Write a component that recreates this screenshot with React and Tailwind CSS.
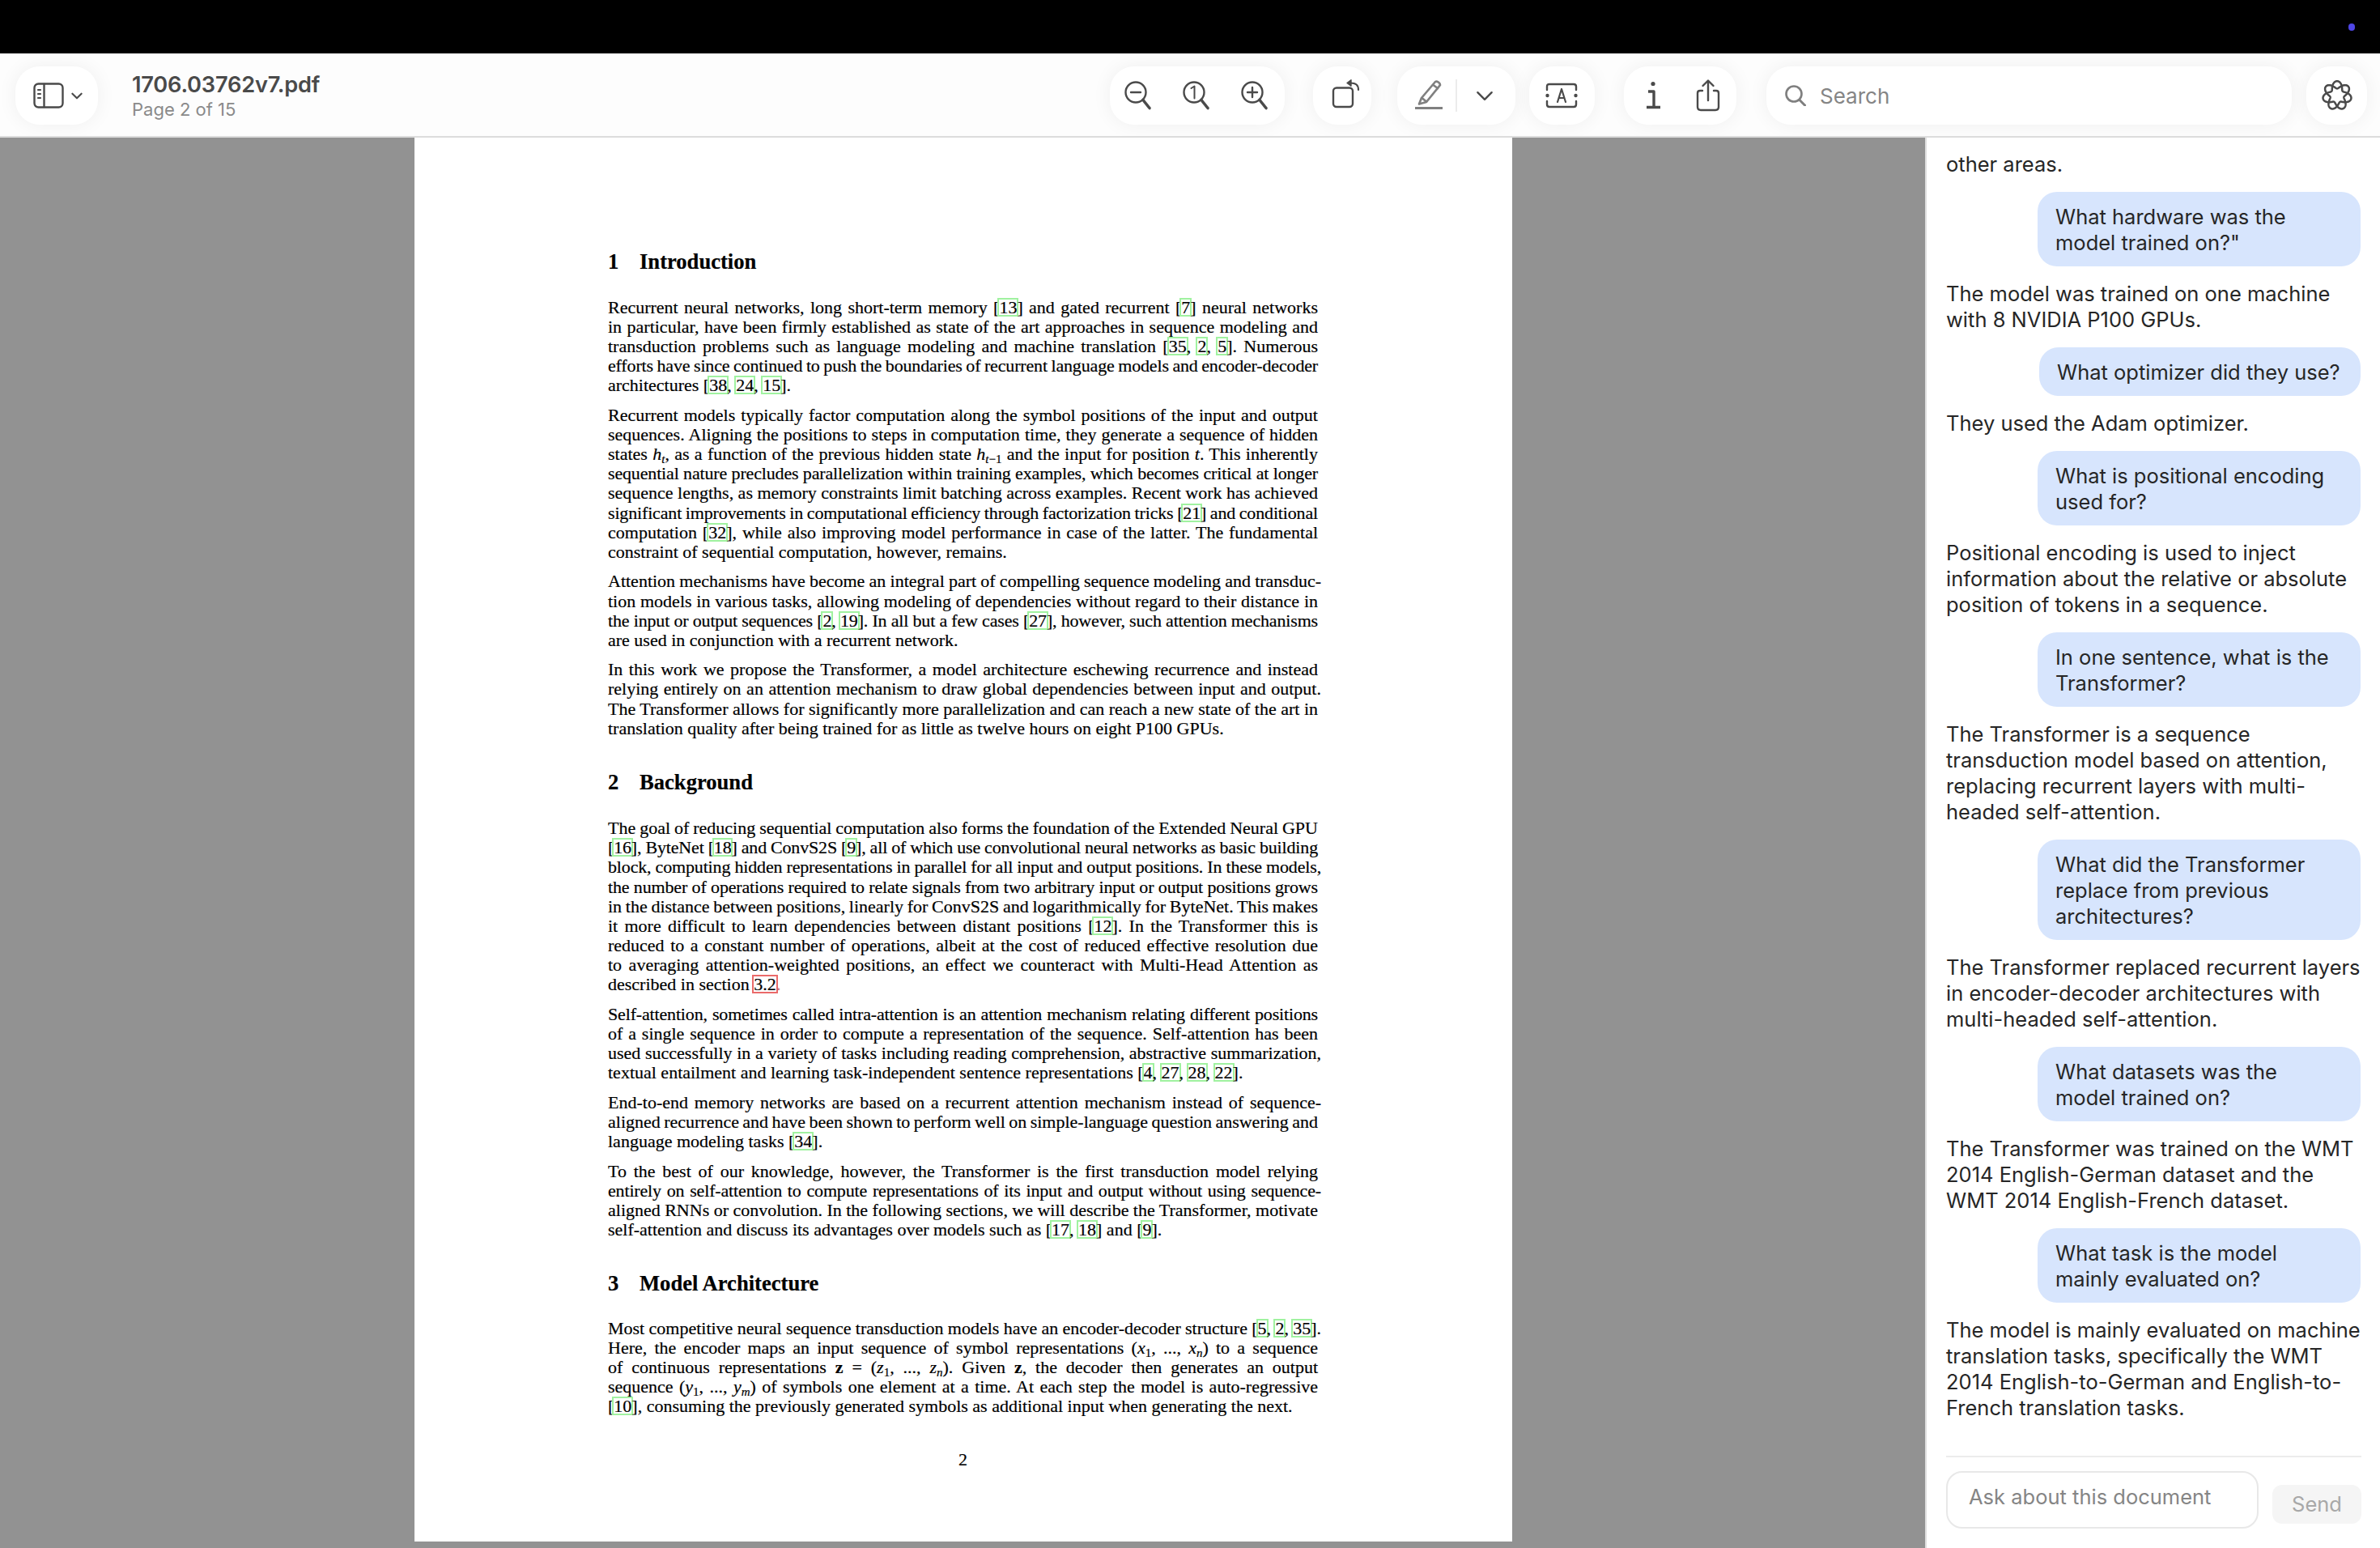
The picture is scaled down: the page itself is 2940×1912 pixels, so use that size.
import React from "react";

const C = ({ children, red }) => (
  <span className={"inline-block leading-[19px] outline-2 outline-solid " + (red ? "outline-[#ea6a6a]" : "outline-[#a0f2a0]")}>{children}</span>
);
const L = ({ children, last, wide, tight }) => (
  <div className={"h-[24.1px] leading-[24.1px] whitespace-nowrap " + (wide ? "w-[881px] " : "w-[877px] ") + (tight ? "tracking-[-0.16px] " : "") + (last ? "text-left" : "[text-align:justify] [text-align-last:justify] [word-spacing:-2.4px]")}>{children}</div>
);
const P = ({ children }) => <div className="mb-[12.6px]">{children}</div>;
const H = ({ n, t, className }) => (
  <div className={"flex font-bold text-[26.6px] leading-[24px] h-[24px] tracking-[0px] " + className}>
    <span className="w-[39px]">{n}</span>
    <span>{t}</span>
  </div>
);
const M = ({ children }) => <i className="italic">{children}</i>;
const S = ({ children }) => <span className="text-[15px] leading-[0] align-[-4px]">{children}</span>;

const Pdf = () => (
  <div className="w-[1356px] h-[1734px] bg-white pl-[239px] pt-[141px] text-black text-[22px] font-['Liberation_Serif',serif] tracking-[0px] [-webkit-text-stroke:0.2px_#000]">
    <H n="1" t="Introduction" className="mb-[33px]" />
    <P>
      <L>Recurrent neural networks, long short-term memory [<C>13</C>] and gated recurrent [<C>7</C>] neural networks</L>
      <L>in particular, have been firmly established as state of the art approaches in sequence modeling and</L>
      <L>transduction problems such as language modeling and machine translation [<C>35</C>, <C>2</C>, <C>5</C>]. Numerous</L>
      <L tight>efforts have since continued to push the boundaries of recurrent language models and encoder-decoder</L>
      <L last>architectures [<C>38</C>, <C>24</C>, <C>15</C>].</L>
    </P>
    <P>
      <L>Recurrent models typically factor computation along the symbol positions of the input and output</L>
      <L>sequences. Aligning the positions to steps in computation time, they generate a sequence of hidden</L>
      <L>states <M>h</M><S><M>t</M></S>, as a function of the previous hidden state <M>h</M><S><M>t</M>−1</S> and the input for position <M>t</M>. This inherently</L>
      <L tight>sequential nature precludes parallelization within training examples, which becomes critical at longer</L>
      <L>sequence lengths, as memory constraints limit batching across examples. Recent work has achieved</L>
      <L tight>significant improvements in computational efficiency through factorization tricks [<C>21</C>] and conditional</L>
      <L>computation [<C>32</C>], while also improving model performance in case of the latter. The fundamental</L>
      <L last>constraint of sequential computation, however, remains.</L>
    </P>
    <P>
      <L wide>Attention mechanisms have become an integral part of compelling sequence modeling and transduc-</L>
      <L>tion models in various tasks, allowing modeling of dependencies without regard to their distance in</L>
      <L tight>the input or output sequences [<C>2</C>, <C>19</C>]. In all but a few cases [<C>27</C>], however, such attention mechanisms</L>
      <L last>are used in conjunction with a recurrent network.</L>
    </P>
    <P>
      <L>In this work we propose the Transformer, a model architecture eschewing recurrence and instead</L>
      <L wide>relying entirely on an attention mechanism to draw global dependencies between input and output.</L>
      <L>The Transformer allows for significantly more parallelization and can reach a new state of the art in</L>
      <L last>translation quality after being trained for as little as twelve hours on eight P100 GPUs.</L>
    </P>
    <H n="2" t="Background" className="mt-[42.5px] mb-[33px]" />
    <P>
      <L>The goal of reducing sequential computation also forms the foundation of the Extended Neural GPU</L>
      <L tight>[<C>16</C>], ByteNet [<C>18</C>] and ConvS2S [<C>9</C>], all of which use convolutional neural networks as basic building</L>
      <L wide tight>block, computing hidden representations in parallel for all input and output positions. In these models,</L>
      <L tight>the number of operations required to relate signals from two arbitrary input or output positions grows</L>
      <L>in the distance between positions, linearly for ConvS2S and logarithmically for ByteNet. This makes</L>
      <L>it more difficult to learn dependencies between distant positions [<C>12</C>]. In the Transformer this is</L>
      <L>reduced to a constant number of operations, albeit at the cost of reduced effective resolution due</L>
      <L>to averaging attention-weighted positions, an effect we counteract with Multi-Head Attention as</L>
      <L last>described in section <C red>3.2</C><span className="text-[#e88]">.</span></L>
    </P>
    <P>
      <L tight>Self-attention, sometimes called intra-attention is an attention mechanism relating different positions</L>
      <L>of a single sequence in order to compute a representation of the sequence. Self-attention has been</L>
      <L wide>used successfully in a variety of tasks including reading comprehension, abstractive summarization,</L>
      <L last>textual entailment and learning task-independent sentence representations [<C>4</C>, <C>27</C>, <C>28</C>, <C>22</C>].</L>
    </P>
    <P>
      <L wide>End-to-end memory networks are based on a recurrent attention mechanism instead of sequence-</L>
      <L>aligned recurrence and have been shown to perform well on simple-language question answering and</L>
      <L last>language modeling tasks [<C>34</C>].</L>
    </P>
    <P>
      <L>To the best of our knowledge, however, the Transformer is the first transduction model relying</L>
      <L wide tight>entirely on self-attention to compute representations of its input and output without using sequence-</L>
      <L>aligned RNNs or convolution. In the following sections, we will describe the Transformer, motivate</L>
      <L last>self-attention and discuss its advantages over models such as [<C>17</C>, <C>18</C>] and [<C>9</C>].</L>
    </P>
    <H n="3" t="Model Architecture" className="mt-[42px] mb-[32px]" />
    <div>
      <L wide>Most competitive neural sequence transduction models have an encoder-decoder structure [<C>5</C>, <C>2</C>, <C>35</C>].</L>
      <L>Here, the encoder maps an input sequence of symbol representations (<M>x</M><S>1</S>, ..., <M>x</M><S><M>n</M></S>) to a sequence</L>
      <L>of continuous representations <b>z</b> = (<M>z</M><S>1</S>, ..., <M>z</M><S><M>n</M></S>). Given <b>z</b>, the decoder then generates an output</L>
      <L>sequence (<M>y</M><S>1</S>, ..., <M>y</M><S><M>m</M></S>) of symbols one element at a time. At each step the model is auto-regressive</L>
      <L last>[<C>10</C>], consuming the previously generated symbols as additional input when generating the next.</L>
    </div>
    <div className="w-[877px] text-center mt-[42px] leading-[24px]">2</div>
  </div>
);

const chat = [
  ["a", "other areas."],
  ["u", "What hardware was the\nmodel trained on?\""],
  ["a", "The model was trained on one machine\nwith 8 NVIDIA P100 GPUs."],
  ["u", "What optimizer did they use?", true],
  ["a", "They used the Adam optimizer."],
  ["u", "What is positional encoding\nused for?"],
  ["a", "Positional encoding is used to inject\ninformation about the relative or absolute\nposition of tokens in a sequence."],
  ["u", "In one sentence, what is the\nTransformer?"],
  ["a", "The Transformer is a sequence\ntransduction model based on attention,\nreplacing recurrent layers with multi-\nheaded self-attention."],
  ["u", "What did the Transformer\nreplace from previous\narchitectures?"],
  ["a", "The Transformer replaced recurrent layers\nin encoder-decoder architectures with\nmulti-headed self-attention."],
  ["u", "What datasets was the\nmodel trained on?"],
  ["a", "The Transformer was trained on the WMT\n2014 English-German dataset and the\nWMT 2014 English-French dataset."],
  ["u", "What task is the model\nmainly evaluated on?"],
  ["a", "The model is mainly evaluated on machine\ntranslation tasks, specifically the WMT\n2014 English-to-German and English-to-\nFrench translation tasks."],
];

const Pill = ({ className, children }) => (
  <div className={"h-[72px] rounded-[30px] bg-white shadow-[0_0_24px_rgba(0,0,0,0.06)] flex items-center shrink-0 " + className}>{children}</div>
);

const Ico = ({ w = 40, h = 40, children, className = "" }) => (
  <svg width={w} height={h} viewBox={`0 0 ${w} ${h}`} fill="none" stroke="#4a4a4a" strokeWidth="2.4" strokeLinecap="round" strokeLinejoin="round" className={"shrink-0 " + className}>{children}</svg>
);

const Mag = ({ children }) => (
  <Ico>
    <circle cx="16" cy="16" r="12.5" />
    <path d="M25 25.5 L33 35.5" strokeWidth="3.6" />
    {children}
  </Ico>
);

const Chev = ({ w = 20, h = 12, sw = 2.6 }) => (
  <svg width={w} height={h} viewBox="0 0 20 12" fill="none" stroke="#4a4a4a" strokeWidth={sw} strokeLinecap="round" strokeLinejoin="round" className="shrink-0">
    <path d="M2 2 L10 10 L18 2" />
  </svg>
);

const rosette = (() => {
  let d = "";
  for (let i = 0; i <= 280; i++) {
    const t = (i / 280) * 4 * Math.PI;
    const r = 13.2 + 4.6 * Math.cos((7 * t) / 2);
    d += (i ? "L" : "M") + (r * Math.sin(t)).toFixed(2) + " " + (-r * Math.cos(t)).toFixed(2);
  }
  return d + "Z";
})();

const Toolbar = () => (
  <div className="h-[104px] shrink-0 bg-[#fdfdfd] border-b-2 border-[#dcdcdc] flex items-center pt-[2px] pl-[19px] pr-[16px] overflow-hidden">
    <Pill className="w-[102px] pl-[22px]">
      <Ico w={38} h={32}>
        <rect x="1.5" y="1.5" width="35" height="29" rx="5" />
        <path d="M13.5 2 V30" />
        <path d="M6 9 H9 M6 14 H9 M6 19 H9" strokeWidth="2.2" />
      </Ico>
      <span className="ml-[9px]"><Chev w={14} h={9} sw={3} /></span>
    </Pill>
    <div className="ml-[42px] flex-1 font-['Inter',sans-serif] flex flex-col">
      <div className="text-[27.2px] leading-[32px] font-semibold text-[#4a4a4a] tracking-[-0.2px]">1706.03762v7.pdf</div>
      <div className="text-[22px] leading-[26px] mt-[1px] text-[#8a8a8a]">Page 2 of 15</div>
    </div>
    <Pill className="w-[216px] pl-[16px] gap-[32px]">
      <Mag><path d="M10 16 H22" /></Mag>
      <Mag><path d="M12.5 11 L16.5 8.5 V23.5" strokeWidth="2" /></Mag>
      <Mag><path d="M10 16 H22 M16 10 V22" /></Mag>
    </Pill>
    <Pill className="ml-[35px] w-[72px] pl-[20px]">
      <Ico w={40} h={40}>
        <rect x="5" y="10.5" width="24" height="23.5" rx="4" />
        <path d="M36 13 C36 7 33 4.5 26 4.5" strokeWidth="2.2" />
        <path d="M27 0.8 L22 4.5 L27 8.2 Z" fill="#4a4a4a" strokeWidth="1.4" />
      </Ico>
    </Pill>
    <Pill className="ml-[32px] w-[146px] pl-[20px]">
      <svg width="38" height="40" viewBox="0 0 38 40" fill="none" stroke="#808080" strokeWidth="2.7" strokeLinecap="round" strokeLinejoin="round" className="shrink-0">
        <path d="M10 23 L27 3 C29 1.5 33 4.5 33 7 L16 28 L7 30.5 Z" />
        <path d="M10.5 23 L16 27.5" />
        <path d="M24.5 7 L30 11" />
        <path d="M2 35.5 H36" strokeWidth="3.2" strokeLinecap="butt" />
      </svg>
      <div className="w-[2px] h-[40px] bg-[#ececec] ml-[14px]" />
      <span className="ml-[23px]"><Chev w={22} h={13} sw={2.2} /></span>
    </Pill>
    <Pill className="ml-[17px] w-[81px] pl-[20px]">
      <Ico w={40} h={32}>
        <path d="M2 9 V5 C2 3 3 2 5 2 H35 C37 2 38 3 38 5 V9" />
        <path d="M2 23 V27 C2 29 3 30 5 30 H35 C37 30 38 29 38 27 V23" />
        <circle cx="2.5" cy="16" r="1" fill="#4a4a4a" />
        <circle cx="37.5" cy="16" r="1" fill="#4a4a4a" />
        <path d="M15 24 L20 8 L25 24 M16.5 19 H23.5" strokeWidth="2.2" />
      </Ico>
    </Pill>
    <Pill className="ml-[36px] w-[139px] pl-[24px]">
      <Ico w={24} h={40}>
        <circle cx="12" cy="5.5" r="2.6" fill="#4a4a4a" stroke="none" />
        <path d="M6 15 H13 V34.5 M4 34.5 H21" strokeWidth="3.4" strokeLinecap="butt" />
      </Ico>
      <span className="ml-[40px]">
        <Ico w={32} h={42}>
          <path d="M9 15 H6 C4 15 3 16 3 18 V35 C3 38 4 39 7 39 H25 C28 39 29 38 29 35 V18 C29 16 28 15 26 15 H23" />
          <path d="M16 27 V3 M9.5 9 L16 2.5 L22.5 9" />
        </Ico>
      </span>
    </Pill>
    <Pill className="ml-[37px] w-[649px] pl-[23px]">
      <svg width="26" height="26" viewBox="0 0 26 26" fill="none" stroke="#7f7f7f" strokeWidth="2.6" strokeLinecap="round" className="shrink-0">
        <circle cx="11" cy="11" r="9.5" />
        <path d="M18 18.5 L24.5 25" strokeWidth="3" />
      </svg>
      <span className="ml-[17px] text-[26px] font-['Inter',sans-serif] text-[#858585]">Search</span>
    </Pill>
    <Pill className="ml-[18px] w-[75px] justify-center">
      <svg width="40" height="40" viewBox="-20 -20 40 40" fill="none" stroke="#4a4a4a" strokeWidth="2.5" strokeLinejoin="round">
        <path d={rosette} />
      </svg>
    </Pill>
  </div>
);

const Sidebar = () => (
  <div className="w-[562px] shrink-0 border-l-2 border-[#dedede] bg-white pl-[24px] pr-[24px] flex flex-col font-['Inter',sans-serif] text-[25.5px] leading-[32px] text-[#262626] overflow-hidden">
    <div className="flex-1 flex flex-col gap-[18px] pt-[17px] whitespace-pre">
      {chat.map(([r, t, narrow], i) =>
        r === "a" ? (
          <div key={i}>{t}</div>
        ) : (
          <div key={i} className={"ml-auto bg-[#d7e5fd] rounded-[24px] pl-[22px] pt-[15px] pb-[13px] " + (narrow ? "w-[397px]" : "w-[399px]")}>{t}</div>
        )
      )}
    </div>
    <div className="border-t-2 border-[#ececec] h-[114px] flex pt-[17px] -mr-[1px]">
      <div className="w-[386px] h-[71px] border-2 border-[#e8e8e8] rounded-[20px] pl-[26px] pt-[14px] text-[#858585]">Ask about this document</div>
      <div className="ml-[17px] mt-[17px] w-[110px] h-[48px] bg-[#f5f5f5] rounded-[12px] flex items-center justify-center text-[#a8a8a8]">Send</div>
    </div>
  </div>
);

export default function App() {
  return (
    <div className="w-[2940px] h-[1912px] flex flex-col overflow-hidden bg-black">
      <div className="h-[66px] shrink-0 bg-black flex items-center justify-end pr-[31px]">
        <div className="w-[8px] h-[9px] rounded-full bg-[#4f46e5]" />
      </div>
      <Toolbar />
      <div className="flex-1 flex min-h-0">
        <div className="flex-1 bg-[#929292] flex justify-center pl-[2px] overflow-hidden">
          <Pdf />
        </div>
        <Sidebar />
      </div>
    </div>
  );
}
